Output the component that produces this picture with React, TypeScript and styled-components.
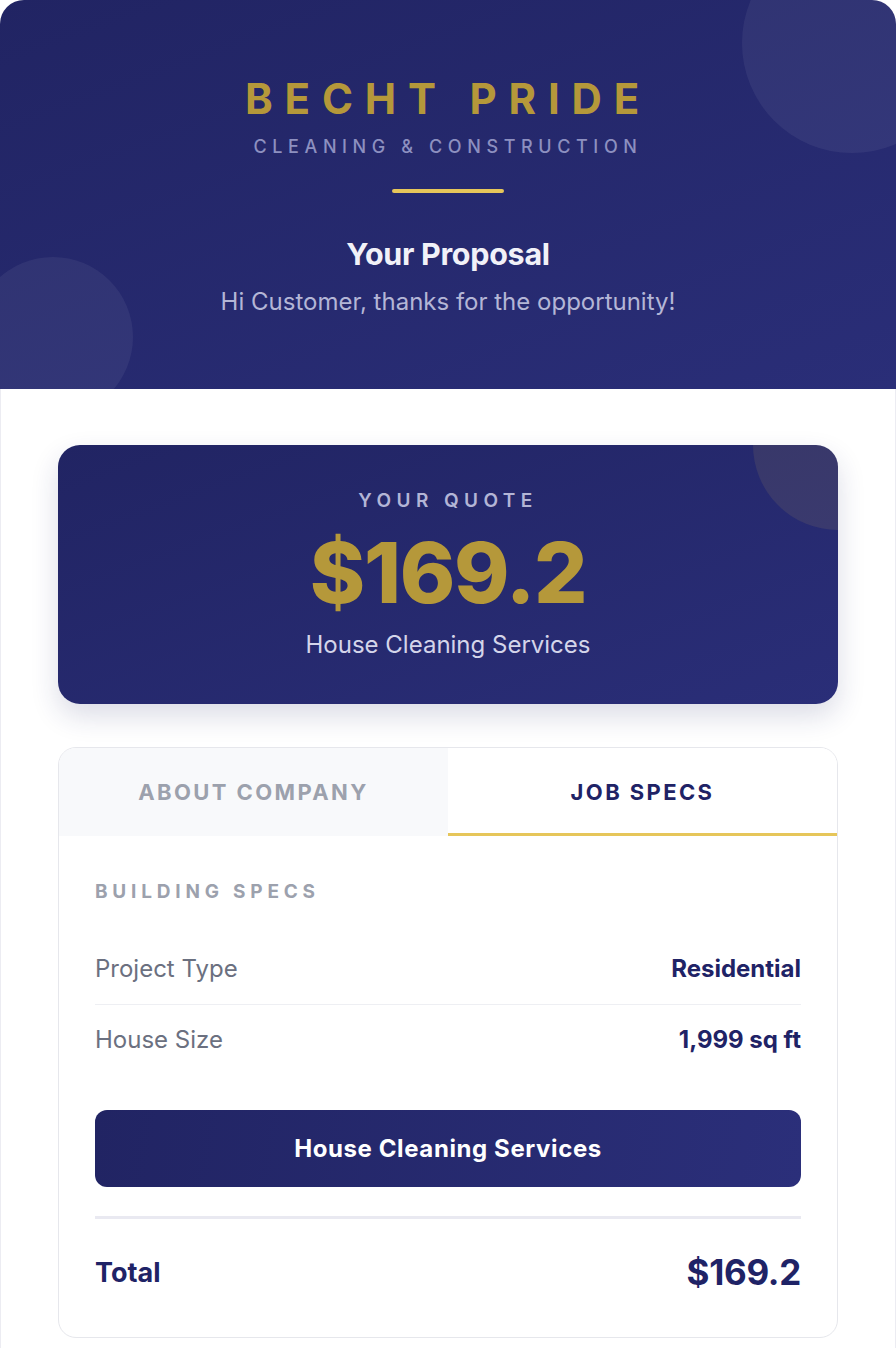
import React, { useState } from 'react';
import styled, { createGlobalStyle } from 'styled-components';

const GlobalStyle = createGlobalStyle`
    html, body {
        margin: 0;
        padding: 0;
        background: #ffffff;
    }
    body {
        font-family: Inter, "Noto Sans", "Liberation Sans", sans-serif;
        -webkit-font-smoothing: antialiased;
    }
    * {
        box-sizing: border-box;
    }
`;

const NAVY = '#1f2366';
const GOLD = '#b5983a';
const YELLOW = '#e6c65a';

const Page = styled.div`
    width: 896px;
    border-radius: 24px 24px 0 0;
    overflow: hidden;
    background: #fff;
`;

const Header = styled.header`
    position: relative;
    overflow: hidden;
    height: 389px;
    padding-top: 74px;
    display: flex;
    flex-direction: column;
    align-items: center;
    background: linear-gradient(160deg, #212463 0%, #2a2e78 100%);
    text-align: center;
`;

const Bubble = styled.div<{ size: number }>`
    position: absolute;
    width: ${props => props.size}px;
    height: ${props => props.size}px;
    border-radius: 50%;
    background: rgba(255, 255, 255, 0.06);
    pointer-events: none;
`;

const TopBubble = styled(Bubble)`
    top: -67px;
    right: -66px;
`;

const BottomBubble = styled(Bubble)`
    left: -27px;
    top: 257px;
`;

const Brand = styled.h1`
    margin: 0;
    font-size: 42px;
    line-height: 50px;
    font-weight: 700;
    letter-spacing: 11.8px;
    color: ${GOLD};
`;

const Tagline = styled.div`
    margin-top: 11px;
    font-size: 18px;
    line-height: 24px;
    font-weight: 500;
    letter-spacing: 5.6px;
    color: #8d90c0;
`;

const Rule = styled.div`
    margin-top: 30px;
    width: 112px;
    height: 4px;
    border-radius: 2px;
    background: ${YELLOW};
`;

const Heading = styled.h2`
    margin: 42px 0 0;
    font-size: 30.5px;
    line-height: 38px;
    font-weight: 700;
    letter-spacing: -0.3px;
    color: #f1f1f8;
`;

const Greeting = styled.p`
    margin: 14px 0 0;
    font-size: 24px;
    line-height: 30px;
    color: #b4b6d6;
`;

const Body = styled.main`
    padding: 56px 57px 10px;
    border-left: 1px solid #ececf2;
    border-right: 1px solid #ececf2;
    display: flex;
    flex-direction: column;
    gap: 43px;
`;

const QuoteCard = styled.section`
    position: relative;
    overflow: hidden;
    height: 259px;
    padding-top: 44px;
    border-radius: 22px;
    background: linear-gradient(160deg, #212463 0%, #2a2e78 100%);
    box-shadow: 0 12px 28px rgba(31, 35, 102, 0.16);
    display: flex;
    flex-direction: column;
    align-items: center;
    text-align: center;
`;

const QuoteBubble = styled.div`
    position: absolute;
    top: -85px;
    right: -85px;
    width: 170px;
    height: 170px;
    border-radius: 50%;
    background: rgba(230, 198, 90, 0.1);
`;

const QuoteLabel = styled.div`
    font-size: 19px;
    line-height: 24px;
    font-weight: 600;
    letter-spacing: 5.4px;
    color: #b3b5d6;
`;

const QuoteAmount = styled.div`
    margin-top: 22px;
    font-size: 84px;
    line-height: 76px;
    font-weight: 800;
    letter-spacing: -1.3px;
    color: ${GOLD};
`;

const QuoteService = styled.div`
    margin-top: 19px;
    font-size: 24px;
    line-height: 30px;
    color: #d4d5ea;
`;

const TabsCard = styled.section`
    border: 1px solid #e6e7ec;
    border-radius: 18px;
    overflow: hidden;
    background: #fff;
`;

const TabBar = styled.div`
    display: grid;
    grid-template-columns: 1fr 1fr;
    border-bottom: 1px solid #e6e7ec;
`;

const Tab = styled.button<{ active?: boolean }>`
    height: 88px;
    border: none;
    margin: 0 0 -1px;
    padding: 0;
    font-family: inherit;
    font-size: 22px;
    font-weight: 700;
    letter-spacing: 2.4px;
    cursor: pointer;
    background: ${props => (props.active ? '#ffffff' : '#f8f9fb')};
    color: ${props => (props.active ? NAVY : '#9ca1ad')};
    box-shadow: ${props => (props.active ? `inset 0 -3px 0 ${YELLOW}` : 'none')};
`;

const TabPanel = styled.div`
    padding: 44px 36px 48px;
`;

const SectionTitle = styled.div`
    font-size: 19px;
    line-height: 24px;
    font-weight: 700;
    letter-spacing: 4.8px;
    color: #9ca1ad;
    margin-bottom: 30px;
`;

const SpecRow = styled.div`
    display: flex;
    justify-content: space-between;
    align-items: center;
    padding: 20px 0;
    font-size: 24px;
    line-height: 30px;

    & + & {
        border-top: 1px solid #eeeff3;
    }
`;

const SpecLabel = styled.span`
    color: #6b7080;
`;

const SpecValue = styled.span`
    color: ${NAVY};
    font-weight: 700;
`;

const ServiceButton = styled.button`
    display: block;
    width: 100%;
    height: 77px;
    margin-top: 35px;
    border: none;
    border-radius: 12px;
    font-family: inherit;
    font-size: 24px;
    font-weight: 700;
    letter-spacing: 0.6px;
    color: #fff;
    background: linear-gradient(100deg, #212463 0%, #2b2f7a 100%);
    cursor: pointer;
`;

const Divider = styled.hr`
    margin: 29px 0 0;
    border: none;
    height: 3px;
    background: #e9e9f1;
`;

const TotalRow = styled.div`
    display: flex;
    justify-content: space-between;
    align-items: center;
    padding-top: 36px;
    height: 70px;
    color: ${NAVY};
    font-weight: 700;
`;

const TotalLabel = styled.span`
    font-size: 27px;
`;

const TotalAmount = styled.span`
    font-size: 35px;
    letter-spacing: -0.3px;
`;

const specs = [
    { label: 'Project Type', value: 'Residential' },
    { label: 'House Size', value: '1,999 sq ft' },
];

export default function App() {
    const [tab, setTab] = useState<'about' | 'specs'>('specs');

    return (
        <>
            <GlobalStyle />
            <Page>
                <Header>
                    <TopBubble size={220} />
                    <BottomBubble size={160} />
                    <Brand>BECHT PRIDE</Brand>
                    <Tagline>CLEANING &amp; CONSTRUCTION</Tagline>
                    <Rule />
                    <Heading>Your Proposal</Heading>
                    <Greeting>Hi Customer, thanks for the opportunity!</Greeting>
                </Header>
                <Body>
                    <QuoteCard>
                        <QuoteBubble />
                        <QuoteLabel>YOUR QUOTE</QuoteLabel>
                        <QuoteAmount>$169.2</QuoteAmount>
                        <QuoteService>House Cleaning Services</QuoteService>
                    </QuoteCard>
                    <TabsCard>
                        <TabBar>
                            <Tab active={tab === 'about'} onClick={() => setTab('about')}>
                                ABOUT COMPANY
                            </Tab>
                            <Tab active={tab === 'specs'} onClick={() => setTab('specs')}>
                                JOB SPECS
                            </Tab>
                        </TabBar>
                        <TabPanel>
                            <SectionTitle>BUILDING SPECS</SectionTitle>
                            {specs.map(s => (
                                <SpecRow key={s.label}>
                                    <SpecLabel>{s.label}</SpecLabel>
                                    <SpecValue>{s.value}</SpecValue>
                                </SpecRow>
                            ))}
                            <ServiceButton>House Cleaning Services</ServiceButton>
                            <Divider />
                            <TotalRow>
                                <TotalLabel>Total</TotalLabel>
                                <TotalAmount>$169.2</TotalAmount>
                            </TotalRow>
                        </TabPanel>
                    </TabsCard>
                </Body>
            </Page>
        </>
    );
}
